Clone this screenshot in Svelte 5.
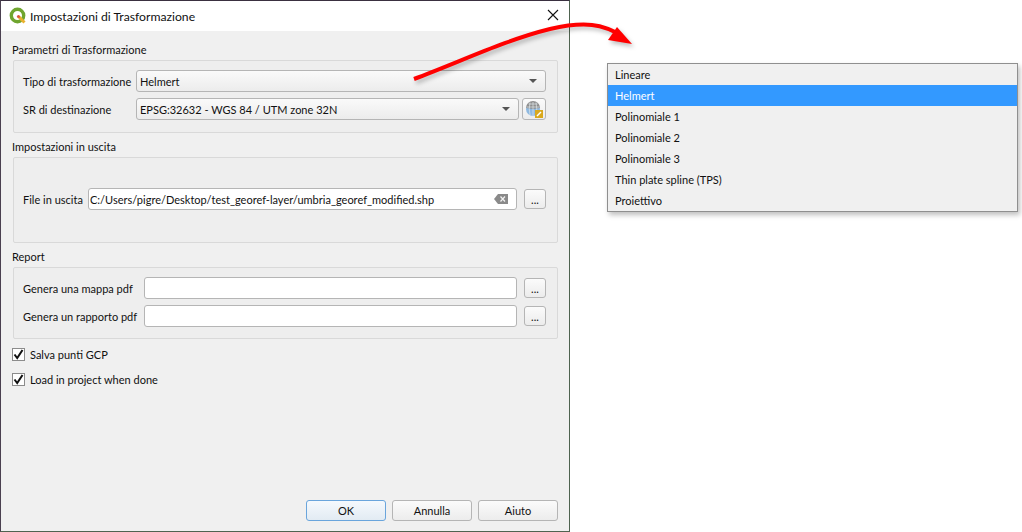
<script lang="ts">
    const options = ['Lineare', 'Helmert', 'Polinomiale 1', 'Polinomiale 2', 'Polinomiale 3', 'Thin plate spline (TPS)', 'Proiettivo'];
    const selected = 'Helmert';
</script>

<div class="page">
    <div class="dialog">
        <header class="titlebar">
            <svg class="logo" width="18" height="18" viewBox="0 0 18 18">
                <circle cx="8.5" cy="8.5" r="6.2" fill="none" stroke="#6fa52f" stroke-width="3.4" />
                <path d="M10 10 L15.5 15.5" stroke="#e9b12e" stroke-width="3" />
                <circle cx="9.5" cy="9.5" r="1.6" fill="#d9573a" />
            </svg>
            <span class="title">Impostazioni di Trasformazione</span>
            <svg class="close" width="12" height="12" viewBox="0 0 12 12">
                <path d="M1 1 L11 11 M11 1 L1 11" stroke="#111" stroke-width="1.1" />
            </svg>
        </header>

        <div class="body">
            <section class="first">
                <h2>Parametri di Trasformazione</h2>
                <div class="group g1">
                    <div class="row">
                        <span class="label l1">Tipo di trasformazione</span>
                        <div class="combo grow">
                            <span>Helmert</span>
                            <i class="caret"></i>
                        </div>
                    </div>
                    <div class="row">
                        <span class="label l1">SR di destinazione</span>
                        <div class="combo grow">
                            <span>EPSG:32632 - WGS 84 / UTM zone 32N</span>
                            <i class="caret"></i>
                        </div>
                        <button class="crs" aria-label="Seleziona SR">
                            <svg width="18" height="18" viewBox="0 0 18 18">
                                <circle cx="8" cy="9" r="7" fill="#8fb9e0" />
                                <path d="M1 8 A7 7 0 0 1 15 8 L8 9 Z" fill="#8e8e8e" />
                                <path d="M1.5 7 H14.5 M8 2 V16 M3.5 4 H12.5 M5 2.5 Q3.5 9 5 15 M11 2.5 Q12.5 9 11 15" stroke="#dfe6ea" stroke-width="0.7" fill="none" />
                                <rect x="10" y="10" width="8" height="8" fill="#d9a81c" />
                                <path d="M12 16 L16 12" stroke="#fff" stroke-width="1.4" />
                            </svg>
                        </button>
                    </div>
                </div>
            </section>

            <section>
                <h2>Impostazioni in uscita</h2>
                <div class="group g2">
                    <div class="row">
                        <span class="label l2">File in uscita</span>
                        <div class="input grow">
                            <span>C:/Users/pigre/Desktop/test_georef-layer/umbria_georef_modified.shp</span>
                            <svg class="clear" width="14" height="10" viewBox="0 0 14 10">
                                <path d="M4 0 H14 V10 H4 L0 5 Z" fill="#8a8a8a" />
                                <path d="M6.5 2.5 L11 7.5 M11 2.5 L6.5 7.5" stroke="#f2f2f2" stroke-width="1.2" />
                            </svg>
                        </div>
                        <button class="dots">...</button>
                    </div>
                </div>
            </section>

            <section>
                <h2>Report</h2>
                <div class="group g3">
                    <div class="row">
                        <span class="label l3">Genera una mappa pdf</span>
                        <div class="input grow"></div>
                        <button class="dots">...</button>
                    </div>
                    <div class="row">
                        <span class="label l3">Genera un rapporto pdf</span>
                        <div class="input grow"></div>
                        <button class="dots">...</button>
                    </div>
                </div>
            </section>

            <div class="check">
                <span class="box"><svg width="11" height="11" viewBox="0 0 11 11"><path d="M1.5 5.5 L4.2 9 L9.5 1" fill="none" stroke="#111" stroke-width="2" /></svg></span>
                Salva punti GCP
            </div>
            <div class="check">
                <span class="box"><svg width="11" height="11" viewBox="0 0 11 11"><path d="M1.5 5.5 L4.2 9 L9.5 1" fill="none" stroke="#111" stroke-width="2" /></svg></span>
                Load in project when done
            </div>

            <footer class="actions">
                <button class="btn default">OK</button>
                <button class="btn">Annulla</button>
                <button class="btn">Aiuto</button>
            </footer>
        </div>
    </div>

    <ul class="menu">
        {#each options as opt}
            <li class:active={opt === selected}>{opt}</li>
        {/each}
    </ul>

    <svg class="arrow" width="260" height="90" viewBox="0 0 260 90">
        <path d="M14 79 C 60 62, 105 40, 150 29 C 185 21, 203 24, 222 36" fill="none" stroke="#ff0000" stroke-width="4" />
        <path d="M217 27 L232 44 L208 40 Z" fill="#ff0000" />
    </svg>
</div>

<style>
    :global(body) {
        margin: 0;
        background: #fff;
    }

    .page {
        position: relative;
        width: 1022px;
        height: 532px;
        display: flex;
        align-items: flex-start;
        overflow: hidden;
        font-family: Lato, "Open Sans", sans-serif;
        font-size: 11px;
        color: #111;
    }

    .dialog {
        width: 570px;
        height: 532px;
        box-sizing: border-box;
        border: 1px solid #4f6350;
        border-top-color: #3a3040;
        border-left-color: #4a4050;
        display: flex;
        flex-direction: column;
        background: #f0f0f0;
        flex: none;
    }

    .titlebar {
        height: 30px;
        background: #fff;
        display: flex;
        align-items: center;
        padding: 0 10px 0 8px;
        flex: none;
    }

    .logo {
        margin-right: 3px;
    }

    .title {
        flex: 1;
        font-size: 12.2px;
    }

    .close {
        margin-bottom: 2px;
    }

    .body {
        flex: 1;
        display: flex;
        flex-direction: column;
        padding: 0 11px 10px 12px;
    }

    section {
        margin-top: 6px;
    }

    section.first {
        margin-top: 11px;
    }

    h2 {
        font-size: 11px;
        font-weight: 400;
        margin: 0 0 3px;
        line-height: 15px;
        margin-left: -1px;
    }

    .group {
        background: #eeeeee;
        border: 1px solid #d9d9d9;
        border-radius: 2px;
        box-sizing: border-box;
        padding: 9px 11px 0 9px;
        display: flex;
        flex-direction: column;
        gap: 6px;
    }

    .g1 {
        height: 73px;
    }

    .g2 {
        height: 86px;
        padding-top: 30px;
    }

    .g3 {
        height: 72px;
    }

    .row {
        display: flex;
        align-items: center;
        height: 22px;
    }

    .label {
        flex: none;
        white-space: nowrap;
    }

    .l1 {
        width: 113px;
    }

    .l2 {
        width: 65px;
    }

    .l3 {
        width: 121px;
    }

    .grow {
        flex: 1;
        min-width: 0;
    }

    .combo,
    .input {
        height: 22px;
        box-sizing: border-box;
        border: 1px solid #b5b5b5;
        border-radius: 3px;
        display: flex;
        align-items: center;
        justify-content: space-between;
    }

    .combo {
        background: linear-gradient(#fafafa, #ececec);
        padding: 0 8px 0 3px;
    }

    .input {
        background: #fff;
        padding: 0 8px 0 1px;
    }

    .caret {
        width: 0;
        height: 0;
        border-left: 4px solid transparent;
        border-right: 4px solid transparent;
        border-top: 4px solid #555;
    }

    button {
        font: inherit;
        color: inherit;
        padding: 0;
        border: 1px solid #b5b5b5;
        border-radius: 3px;
        background: linear-gradient(#fbfbfb, #ececec);
    }

    .crs {
        width: 24px;
        height: 22px;
        margin-left: 3px;
        display: flex;
        align-items: center;
        justify-content: center;
    }

    .dots {
        width: 22px;
        height: 20px;
        margin-left: 7px;
        flex: none;
    }

    .check {
        display: flex;
        align-items: center;
        gap: 5px;
        height: 13px;
        margin-left: -1px;
    }

    section + .check {
        margin-top: 9px;
    }

    .check + .check {
        margin-top: 12px;
    }

    .box {
        width: 11px;
        height: 11px;
        border: 1px solid #8c8c8c;
        background: #fff;
        display: flex;
    }

    .actions {
        margin-top: auto;
        display: flex;
        justify-content: flex-end;
        gap: 6px;
    }

    .btn {
        width: 80px;
        height: 21px;
    }

    .btn.default {
        border-color: #6aa5dc;
        background: linear-gradient(#f5f9fd, #e2ebf3);
    }

    .menu {
        list-style: none;
        margin: 63px 0 0 37px;
        padding: 0;
        width: 411px;
        box-sizing: border-box;
        background: #f0f0f0;
        border: 1px solid #8f8f8f;
        box-shadow: 2px 3px 5px rgba(0, 0, 0, 0.25);
        flex: none;
    }

    .menu li {
        height: 21px;
        line-height: 21px;
        padding-left: 7px;
    }

    .menu li.active {
        background: #3399ff;
        color: #fff;
    }

    .arrow {
        position: absolute;
        left: 400px;
        top: 0;
        filter: drop-shadow(2px 3px 2px rgba(0, 0, 0, 0.25));
    }
</style>
